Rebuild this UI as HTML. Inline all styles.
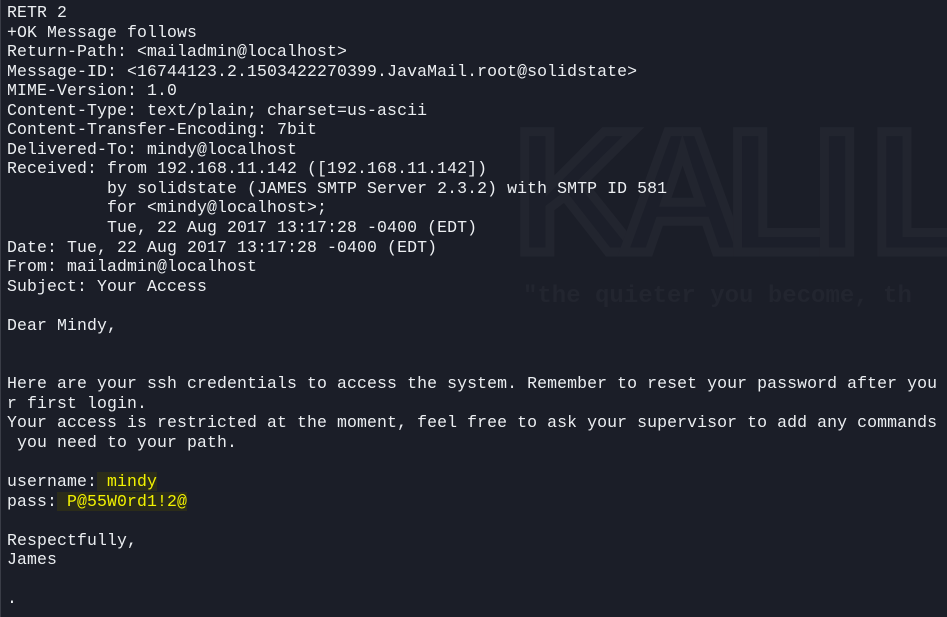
<!DOCTYPE html>
<html><head><meta charset="utf-8"><style>
html,body{margin:0;padding:0;}
body{width:947px;height:617px;background:#1b1e28;overflow:hidden;position:relative;border-left:1px solid #3a3d47;box-sizing:border-box;}
pre{position:absolute;left:6px;top:3px;margin:0;font-family:"Liberation Mono",monospace;font-size:16.5px;letter-spacing:0.1px;line-height:19.55px;color:#eceff2;z-index:2;}
.h{background:#2b2c1a;color:#f2f200;}
svg{position:absolute;left:0;top:0;z-index:1;}
</style></head><body>
<svg width="947" height="617">
<text x="512" y="252" font-family="Liberation Sans, sans-serif" font-weight="bold" font-size="175" fill="#1c1f2a" stroke="#22252f" stroke-width="9" letter-spacing="6" textLength="470">KALI L</text>
<text x="522" y="302" font-family="Liberation Mono, monospace" font-weight="bold" font-size="24" fill="#22252f">"the quieter you become, th</text>
</svg>
<pre>RETR 2
+OK Message follows
Return-Path: &lt;mailadmin@localhost&gt;
Message-ID: &lt;16744123.2.1503422270399.JavaMail.root@solidstate&gt;
MIME-Version: 1.0
Content-Type: text/plain; charset=us-ascii
Content-Transfer-Encoding: 7bit
Delivered-To: mindy@localhost
Received: from 192.168.11.142 ([192.168.11.142])
          by solidstate (JAMES SMTP Server 2.3.2) with SMTP ID 581
          for &lt;mindy@localhost&gt;;
          Tue, 22 Aug 2017 13:17:28 -0400 (EDT)
Date: Tue, 22 Aug 2017 13:17:28 -0400 (EDT)
From: mailadmin@localhost
Subject: Your Access

Dear Mindy,


Here are your ssh credentials to access the system. Remember to reset your password after you
r first login.
Your access is restricted at the moment, feel free to ask your supervisor to add any commands
 you need to your path.

username:<span class="h"> mindy</span>
pass:<span class="h"> P@55W0rd1!2@</span>

Respectfully,
James

.</pre>
</body></html>
